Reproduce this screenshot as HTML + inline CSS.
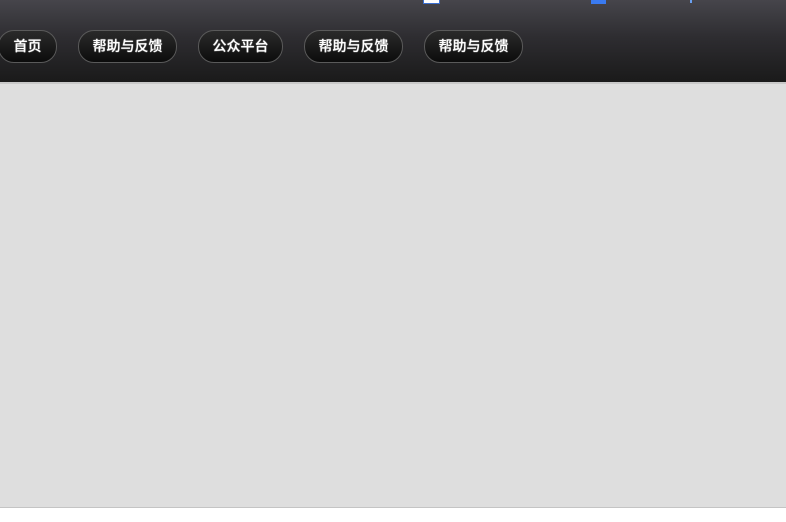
<!DOCTYPE html>
<html><head><meta charset="utf-8"><style>
html,body{margin:0;padding:0;width:786px;height:522px;overflow:hidden;background:#fff;font-family:"Liberation Sans","Noto Sans CJK SC",sans-serif}
.hd{position:absolute;left:0;top:0;width:786px;height:82px;background:linear-gradient(#46454b,#2e2d31 45%,#1a1a1a);}
.line{position:absolute;left:0;top:82px;width:786px;height:2px;background:#c8c8c8}
.body{position:absolute;left:0;top:84px;width:786px;height:423px;background:#dedede}
.bl{position:absolute;left:0;top:507px;width:786px;height:1px;background:#c4c4c4}
.b{position:absolute;top:30px;height:31px;border:1px solid #5a5a5a;border-radius:16px;background:linear-gradient(#2a2a2a,#0c0c0c);color:#fff;font-size:14px;font-weight:500;line-height:31px;text-align:center;text-shadow:0 0 1px #fff}
.ic{position:absolute;top:0}
</style></head><body>
<div class="hd"></div>
<div class="ic" style="left:423px;width:15px;height:3px;background:#fff;border:1px solid #3b6fd0;border-top:none"></div>
<div class="ic" style="left:591px;width:15px;height:4px;background:#3a7af0"></div>
<div class="ic" style="left:690px;width:2px;height:3px;background:#6aa0f0"></div>
<div class="b" style="left:-2px;width:57px">首页</div>
<div class="b" style="left:78px;width:97px">帮助与反馈</div>
<div class="b" style="left:198px;width:83px">公众平台</div>
<div class="b" style="left:304px;width:97px">帮助与反馈</div>
<div class="b" style="left:424px;width:97px">帮助与反馈</div>
<div class="line"></div>
<div class="body"></div>
<div class="bl"></div>
</body></html>
